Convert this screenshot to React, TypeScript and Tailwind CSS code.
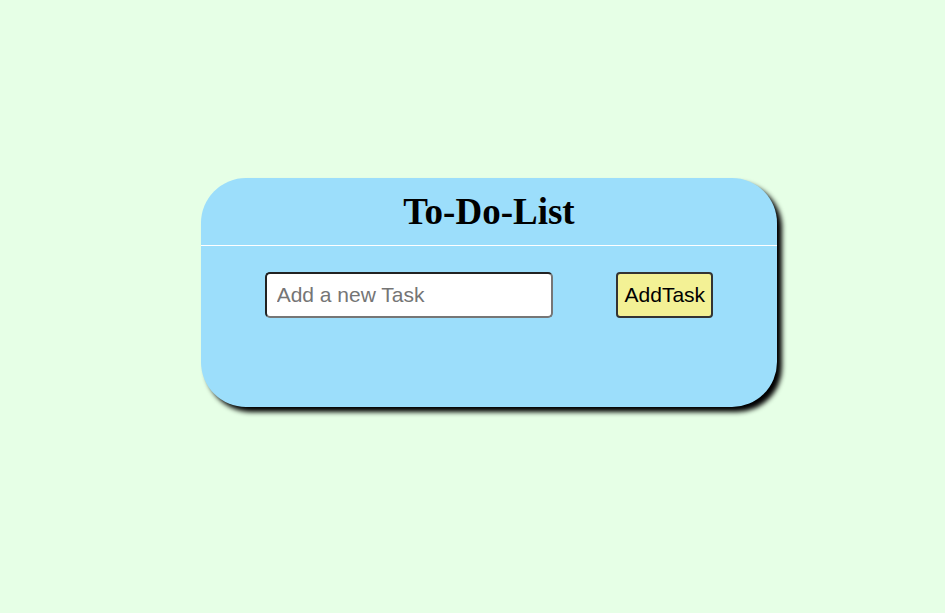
export default function App() {
  return (
    <div className="min-h-[613px] w-full bg-[#e6ffe6] pt-[178px] pl-[201px]">
      <div className="w-[576px] h-[229px] rounded-[45px] bg-[#9cdefb] shadow-[5px_5px_5px_#000] flex flex-col">
        <h1 className="text-center font-bold text-[37px] leading-[42px] pt-[13px] pb-[12px] text-black" style={{ fontFamily: '"Liberation Serif", "Times New Roman", serif' }}>
          To-Do-List
        </h1>
        <div className="h-px bg-white w-full" />
        <div className="flex justify-evenly items-center mt-[26px]">
          <input
            type="text"
            placeholder="Add a new Task"
            className="w-[288px] h-[46px] rounded-[5px] bg-white border-2 border-t-[#222] border-l-[#222] border-b-[#767676] border-r-[#767676] px-[10px] text-[21px] text-black placeholder:text-[#757575] outline-none"
            style={{ fontFamily: '"Liberation Sans", Arial, sans-serif' }}
          />
          <button
            className="w-[97px] h-[46px] rounded-[4px] bg-[#f3f195] border-2 border-[#333] text-[21px] text-black"
            style={{ fontFamily: '"Liberation Sans", Arial, sans-serif' }}
          >
            AddTask
          </button>
        </div>
      </div>
    </div>
  );
}
